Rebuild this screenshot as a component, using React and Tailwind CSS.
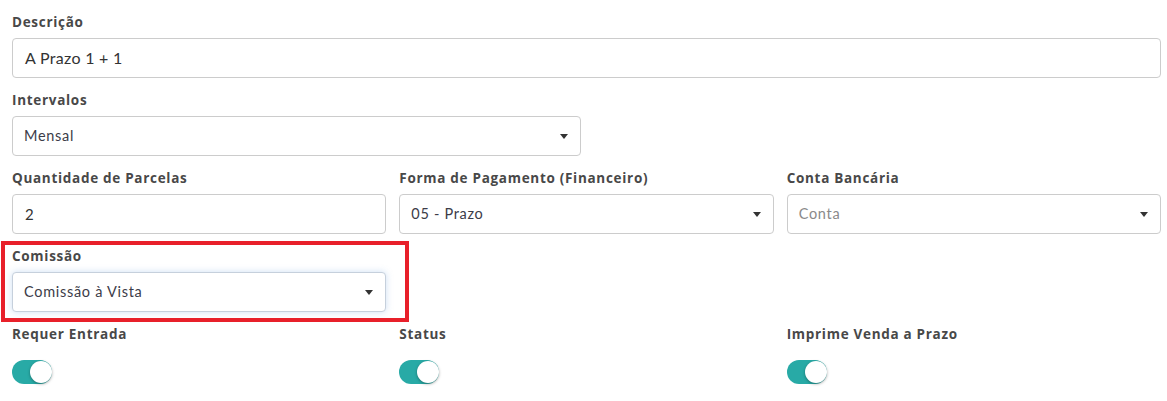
import React from "react";

const font = { fontFamily: "Lato, 'Open Sans', sans-serif" };
const labelFont = { fontFamily: "'Open Sans', Lato, sans-serif" };

function Label({ children, mb = "mb-[6px]" }) {
  return (
    <div
      style={labelFont}
      className={"h-[20px] leading-[20px] text-[13.5px] font-bold text-[#484848] tracking-[0.7px] " + mb}
    >
      {children}
    </div>
  );
}

function Caret() {
  return (
    <svg width="8" height="5" viewBox="0 0 8 5" className="shrink-0">
      <path d="M0 0 L8 0 L4 5 Z" fill="#333" />
    </svg>
  );
}

function Select({ value, placeholder, focused }) {
  return (
    <div
      className={
        "h-[40px] rounded-[4px] border bg-white flex items-center justify-between pl-[11px] pr-[12px] " +
        (focused
          ? "border-[#c6d0dc] shadow-[0_0_7px_rgba(110,160,220,0.35)]"
          : "border-[#cccccc]")
      }
    >
      <span
        className={
          "text-[14.5px] tracking-[0.7px] " +
          (placeholder ? "text-[#8a8a8a]" : "text-[#3c3c48]")
        }
      >
        {value}
      </span>
      <Caret />
    </div>
  );
}

function Input({ value, big }) {
  return (
    <div className="h-[40px] rounded-[4px] border border-[#cccccc] bg-white flex items-center pl-[12px]">
      <span className={"tracking-[0.3px] text-[#333] " + (big ? "text-[16px]" : "text-[15px]")}>{value}</span>
    </div>
  );
}

function Toggle() {
  return (
    <div className="relative w-[40px] h-[24px] rounded-full bg-[#28aaa6]">
      <div className="absolute right-0 top-[1px] w-[22px] h-[22px] rounded-full bg-white shadow-[0_1px_3px_rgba(0,0,0,0.35)]" />
    </div>
  );
}

export default function App() {
  return (
    <div style={font} className="relative w-[1167px] h-[401px] bg-white pl-[12px] pr-[6px] pt-[12px] overflow-hidden">
      <div className="mb-[12px]">
        <Label>Descrição</Label>
        <Input value="A Prazo 1 + 1" big />
      </div>
      <div className="mb-[12px] w-[569px]">
        <Label>Intervalos</Label>
        <Select value="Mensal" />
      </div>
      <div className="grid grid-cols-3 gap-x-[13px] mb-[12px]">
        <div>
          <Label>Quantidade de Parcelas</Label>
          <Input value="2" />
        </div>
        <div>
          <Label>Forma de Pagamento (Financeiro)</Label>
          <Select value="05 - Prazo" />
        </div>
        <div>
          <Label>Conta Bancária</Label>
          <Select value="Conta" placeholder />
        </div>
      </div>
      <div className="grid grid-cols-3 gap-x-[13px] mb-[12px]">
        <div>
          <Label>Comissão</Label>
          <Select value="Comissão à Vista" focused />
        </div>
      </div>
      <div className="grid grid-cols-3 gap-x-[13px]">
        <div>
          <Label mb="mb-[16px]">Requer Entrada</Label>
          <Toggle />
        </div>
        <div>
          <Label mb="mb-[16px]">Status</Label>
          <Toggle />
        </div>
        <div>
          <Label mb="mb-[16px]">Imprime Venda a Prazo</Label>
          <Toggle />
        </div>
      </div>
      <div className="absolute left-[1px] top-[241px] w-[408px] h-[81px] border-[4px] border-[#e8202a] pointer-events-none" />
    </div>
  );
}
